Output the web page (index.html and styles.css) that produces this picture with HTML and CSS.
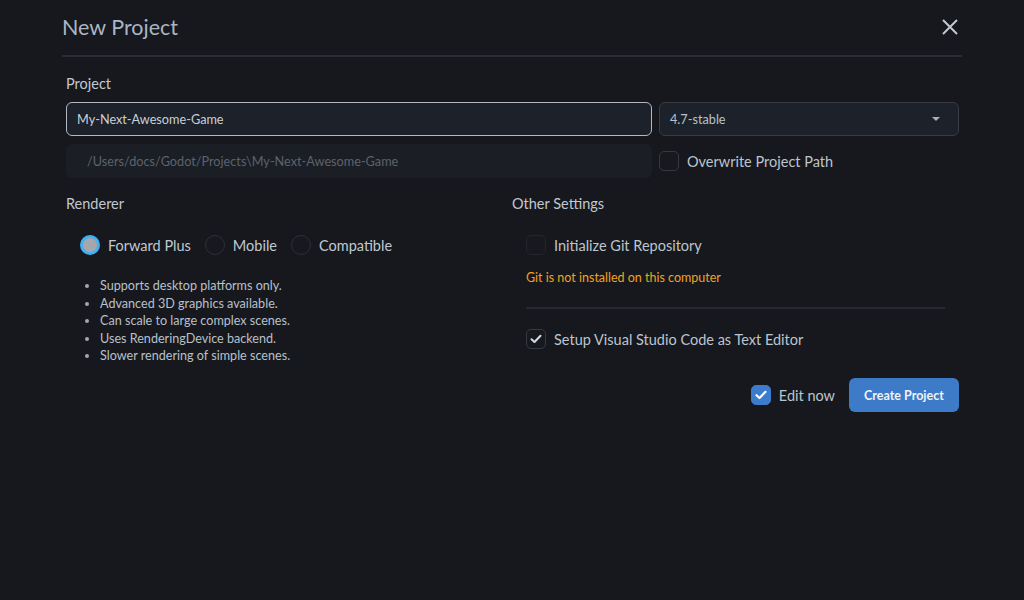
FILE: index.html
```html
<!DOCTYPE html>
<html>
<head>
<meta charset="utf-8">
<link rel="stylesheet" href="styles.css">
</head>
<body>
<div class="dialog">
  <header class="head">
    <h1 class="title">New Project</h1>
    <svg class="close" width="16" height="16" viewBox="0 0 16 16"><path d="M1 1L15 15M15 1L1 15" stroke="#c3c8cf" stroke-width="2" fill="none"/></svg>
  </header>
  <div class="body">
    <div class="label">Project</div>
    <div class="row">
      <div class="input active">My-Next-Awesome-Game</div>
      <div class="select"><span>4.7-stable</span><svg width="8" height="5" viewBox="0 0 8 5"><path d="M0 0H8L4 4Z" fill="#a9b0b9"/></svg></div>
    </div>
    <div class="row row2">
      <div class="path">/Users/docs/Godot/Projects\My-Next-Awesome-Game</div>
      <label class="check"><span class="box"></span><span>Overwrite Project Path</span></label>
    </div>
    <div class="cols">
      <div class="col left">
        <div class="label">Renderer</div>
        <div class="radios">
          <div class="radio on"><span class="dot"></span>Forward Plus</div>
          <div class="radio"><span class="dot"></span>Mobile</div>
          <div class="radio"><span class="dot"></span>Compatible</div>
        </div>
        <ul class="feat">
          <li>Supports desktop platforms only.</li>
          <li>Advanced 3D graphics available.</li>
          <li>Can scale to large complex scenes.</li>
          <li>Uses RenderingDevice backend.</li>
          <li>Slower rendering of simple scenes.</li>
        </ul>
      </div>
      <div class="col right">
        <div class="label">Other Settings</div>
        <div class="other">
          <label class="check git"><span class="box dim"></span><span>Initialize Git Repository</span></label>
          <div class="warn">Git is not installed on this computer</div>
          <div class="sep"></div>
          <label class="check vsc"><span class="box"><svg width="12" height="10" viewBox="0 0 12 10"><path d="M1.5 5.2L4.5 8L10.5 1.8" stroke="#d6dae0" stroke-width="2" fill="none" stroke-linecap="round" stroke-linejoin="round"/></svg></span><span>Setup Visual Studio Code as Text Editor</span></label>
        </div>
        <div class="actions">
          <label class="check edit"><span class="box blue"><svg width="12" height="10" viewBox="0 0 12 10"><path d="M1.5 5.2L4.5 8L10.5 1.8" stroke="#ffffff" stroke-width="2.2" fill="none" stroke-linecap="round" stroke-linejoin="round"/></svg></span><span>Edit now</span></label>
          <button class="btn">Create Project</button>
        </div>
      </div>
    </div>
  </div>
</div>
</body>
</html>
```

FILE: styles.css
```css
* { box-sizing: border-box; }
html, body { margin: 0; padding: 0; }
body {
  background: #16181d;
  width: 1024px;
  height: 600px;
  overflow: hidden;
  font-family: Lato, "Noto Sans", sans-serif;
  color: #c4cad2;
}
.dialog { padding: 0 62px 0 62px; }
.head {
  height: 57px;
  display: flex;
  align-items: center;
  justify-content: space-between;
  border-bottom: 2px solid #292c32;
  padding-bottom: 2px;
}
.title {
  margin: 0;
  font-weight: 400;
  font-size: 21.5px;
  color: #aab6c3;
}
.close { margin-right: 4px; }
.body { padding: 0 3px 0 4px; }
.label { font-size: 14.5px; color: #c0c8d2; height: 20px; line-height: 20px; }
.body > .label { margin-top: 17px; }
.row { display: flex; gap: 7px; margin-top: 8px; }
.row2 { margin-top: 8px; }
.input, .select, .path {
  height: 34px;
  border-radius: 6px;
  font-size: 12.7px;
  display: flex;
  align-items: center;
}
.input {
  width: 586px;
  background: #1d2129;
  border: 1px solid #b3b9c2;
  padding-left: 10px;
  color: #c9d0d9;
}
.select {
  flex: 1;
  background: #1d2129;
  border: 1px solid #363b44;
  padding: 0 18px 0 10px;
  justify-content: space-between;
  color: #b6c2cf;
}
.path {
  width: 586px;
  background: #1b1e24;
  padding-left: 21px;
  color: #5c636d;
}
.check { display: flex; align-items: center; gap: 8px; font-size: 14.5px; color: #bcc5cf; }
.box {
  width: 20px; height: 20px;
  border: 1px solid #353a42;
  border-radius: 5px;
  display: flex; align-items: center; justify-content: center;
  background: #17191e;
}
.box.dim { border-color: #23262c; }
.box.blue { background: #3c7ccc; border-color: #3c7ccc; }
.cols { display: flex; margin-top: 16px; }
.col.left { width: 446px; }
.col.right { flex: 1; }
.radios { display: flex; align-items: center; margin-top: 21px; padding-left: 14px; font-size: 14.5px; }
.radio { display: flex; align-items: center; gap: 8px; margin-right: 14px; color: #c0c8d2; }
.dot {
  width: 20px; height: 20px; border-radius: 50%;
  border: 1px solid #2c3037;
  background: #17191e;
}
.radio.on .dot { border: 3px solid #45b0f0; background: #a4a7ad; }
.feat {
  margin: 22px 0 0 0;
  padding-left: 34px;
  font-size: 12.6px;
  line-height: 17.5px;
  color: #b8c0ca;
}
.feat li::marker { color: #a0a7b0; font-size: 12px; }
.other { padding-left: 14px; padding-right: 14px; }
.git { margin-top: 21px; }
.warn { color: #f0a31f; font-size: 12.5px; margin-top: 15px; line-height: 16px; }
.sep { height: 2px; background: #26292f; margin-top: 21px; }
.vsc { margin-top: 20px; }
.actions { display: flex; justify-content: flex-end; align-items: center; margin-top: 29px; gap: 14px; }
.edit { gap: 8px; }
.btn {
  width: 110px; height: 34px;
  border: none;
  border-radius: 6px;
  background: #3d7ac8;
  color: #eef3f9;
  font-family: Lato, "Noto Sans", sans-serif;
  font-weight: 700;
  font-size: 12.5px;
}
```
